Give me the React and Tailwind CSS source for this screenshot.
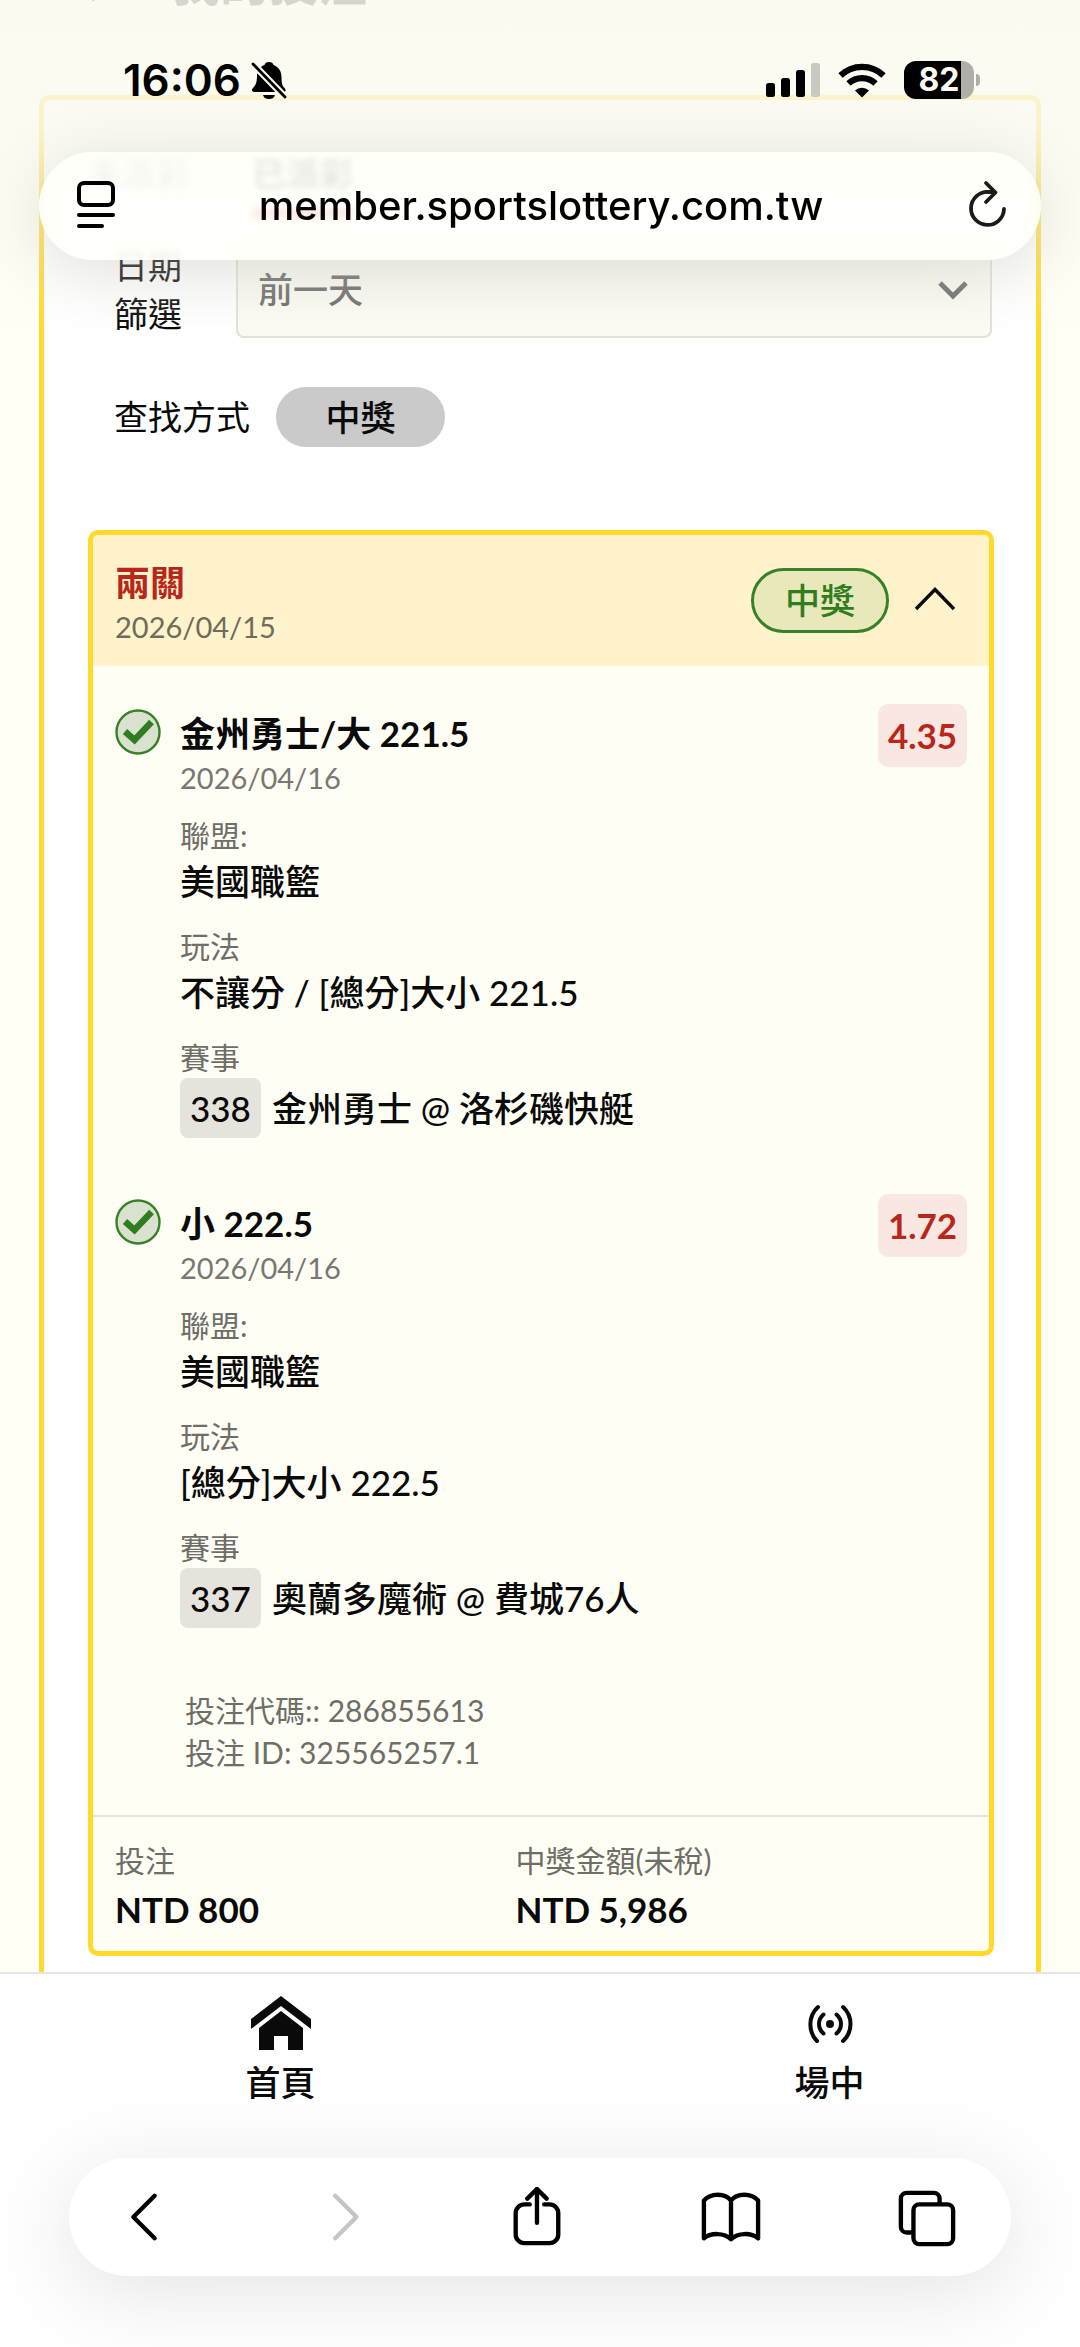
import React from "react";

const legs = [
  {
    title: "金州勇士/大 221.5",
    date: "2026/04/16",
    odds: "4.35",
    league: "美國職籃",
    play: "不讓分 / [總分]大小 221.5",
    code: "338",
    match: "金州勇士 @ 洛杉磯快艇",
  },
  {
    title: "小 222.5",
    date: "2026/04/16",
    odds: "1.72",
    league: "美國職籃",
    play: "[總分]大小 222.5",
    code: "337",
    match: "奧蘭多魔術 @ 費城76人",
  },
];

export default function App() {
  return (
    <div className="relative flex min-h-screen flex-col overflow-hidden bg-[#fffff5] font-['Lato','Noto_Sans_CJK_TC',sans-serif] text-[35px] text-[#0a0a0a]">
      <PageHeader />
      <main className="mx-[39px] rounded-t-[10px] border-x-[5px] border-t-[5px] border-[#ffd92b] bg-white pr-[42px] pb-4 pl-[44px]">
        <Tabs />
        <Filters />
        <BetCard />
      </main>
      <div className="flex flex-1 flex-col bg-[#fefefe]">
        <BottomNav />
        <SafariToolbar />
      </div>

      {/* browser chrome floating over the page */}
      <div className="pointer-events-none absolute inset-x-0 top-0 h-[330px] bg-linear-to-b from-[#fafaf0]/85 via-[#fafaf0]/80 via-40% to-[#fafaf0]/0" />
      <div className="absolute inset-x-0 top-0 z-20">
        <StatusBar />
        <AddressBar />
      </div>
    </div>
  );
}

function PageHeader() {
  return (
    <header className="flex h-[95px] items-start gap-[72px] pl-[71px]">
      <button type="button" aria-label="返回" className="-mt-[46px]">
        <svg width="28" height="48" viewBox="0 0 28 48" fill="none" stroke="currentColor" strokeWidth="5">
          <path d="M24 4 6 24l18 22" />
        </svg>
      </button>
      <h1 className="-mt-[46px] text-[49px] leading-[56px] font-bold">我的投注</h1>
    </header>
  );
}

function Tabs() {
  return (
    <div role="tablist" className="relative z-10 flex h-[142px] items-start gap-[62px] pt-[56px] text-[34px] leading-[36px]">
      <button type="button" role="tab" aria-selected="false" className="font-medium text-[#888]">
        未派彩
      </button>
      <button type="button" role="tab" aria-selected="true" className="border-b-[10px] border-[#ff2a1a] pb-4 font-bold">
        已派彩
      </button>
    </div>
  );
}

function Filters() {
  return (
    <div className="pr-0.5 pl-[26px]">
      <div className="flex items-center">
        <label htmlFor="date" className="w-[122px] pr-[50px] text-[34px] leading-[48px]">
          日期篩選
        </label>
        <div className="relative flex-1">
          <select
            id="date"
            className="block h-24 w-full appearance-none rounded-lg border-2 border-[#e3e0d9] bg-[#fcfbf3] pb-0.5 pl-5 font-medium text-[#6b6b6b]"
          >
            <option>前一天</option>
          </select>
          <svg className="pointer-events-none absolute top-9 right-6" width="30" height="24" viewBox="0 0 30 24" fill="none" stroke="#6b6b6b" strokeWidth="5">
            <path d="M2 5l13 13L28 5" />
          </svg>
        </div>
      </div>
      <div className="mt-[49px] flex items-center gap-[26px]">
        <span className="text-[34px] leading-[60px]">查找方式</span>
        <button type="button" className="h-[60px] w-[169px] rounded-full bg-[#cacaca] font-medium">
          中獎
        </button>
      </div>
    </div>
  );
}

function BetCard() {
  return (
    <section className="mt-[83px] overflow-hidden rounded-[10px] border-[5px] border-[#ffd92b] bg-[#fffef5]">
      <div className="flex h-[131px] items-center bg-[#fef3cb] px-[22px]">
        <div className="flex-1 pt-1.5 leading-[46px]">
          <h2 className="font-bold text-[#b9261b]">兩關</h2>
          <p className="text-[29px] leading-[44px] text-[#6f6c5a]">2026/04/15</p>
        </div>
        <span className="flex h-[65px] w-[138px] items-center justify-center rounded-full border-[3px] border-[#3a8029] bg-[#e9e8ba] font-medium text-[#2f7d1f]">
          中獎
        </span>
        <button type="button" aria-label="收合" className="mr-2.5 ml-6">
          <svg width="44" height="44" viewBox="0 0 44 44" fill="none" stroke="currentColor" strokeWidth="3.4">
            <path d="M3 30 22 10.500 41 30" />
          </svg>
        </button>
      </div>

      <div className="flex flex-col gap-14 px-[22px] pt-[38px] pb-[42px]">
        {legs.map((leg) => (
          <Leg key={leg.code} leg={leg} />
        ))}
        <div className="pt-[5px] pl-[70px] text-[30px] leading-[42px] text-[#6e6e69]">
          <p>投注代碼:: 286855613</p>
          <p>投注 ID: 325565257.1</p>
        </div>
      </div>

      <dl className="grid grid-cols-[47%_53%] border-t-2 border-[#e6e4dd] px-[22px] pt-[22px] pb-3.5">
        <div>
          <dt className="text-[30px] leading-[42px] text-[#6e6e69]">投注</dt>
          <dd className="leading-[56px] font-bold">NTD 800</dd>
        </div>
        <div>
          <dt className="text-[30px] leading-[42px] text-[#6e6e69]">中獎金額(未稅)</dt>
          <dd className="leading-[56px] font-bold">NTD 5,986</dd>
        </div>
      </dl>
    </section>
  );
}

const Leg = ({ leg }) => {
  return (
    <article className="flex items-start">
      <svg className="mt-[5px] mr-[19px] shrink-0" width="46" height="46" viewBox="0 0 46 46" fill="none">
        <circle cx="23" cy="23" r="21.500" fill="#d8e2ce" stroke="#3a8029" strokeWidth="2.4" />
        <path d="m10 22.500 9.500 8.500L36.500 13" stroke="#2f7d1f" strokeWidth="6.500" />
      </svg>
      <div className="flex-1 pt-[5px]">
        <h3 className="leading-[48px] font-bold">{leg.title}</h3>
        <p className="text-[29px] leading-[42px] text-[#777773]">{leg.date}</p>
        <div className="mt-[15px] flex flex-col gap-[19px] font-medium">
          <Field label="聯盟:">{leg.league}</Field>
          <Field label="玩法">{leg.play}</Field>
          <Field label="賽事">
            <span className="flex items-center gap-[11px] leading-[60px]">
              <span className="rounded-lg bg-[#e6e3dd] px-2.5">{leg.code}</span>
              {leg.match}
            </span>
          </Field>
        </div>
      </div>
      <span className="w-[89px] rounded-[10px] bg-[#f9e8e1] text-center leading-[63px] font-bold text-[#b9261b]">
        {leg.odds}
      </span>
    </article>
  );
};

const Field = ({ label, children }) => {
  return (
    <div>
      <div className="text-[30px] leading-[42px] font-normal text-[#6e6e69]">{label}</div>
      <div className="leading-[50px]">{children}</div>
    </div>
  );
};

function BottomNav() {
  return (
    <nav className="border-t-2 border-[#e6e6e6] pt-[22px]">
      {/* the row runs a little past the right edge */}
      <div className="-mr-6 ml-1.5 grid grid-cols-2 leading-[44px] font-medium">
        <a href="#home" className="flex flex-col items-center gap-2.5">
          <svg width="60" height="54" viewBox="0 0 60 54" fill="#0a0a0a">
            <path d="M30 0 60 23v10L30 10 0 33V23z" />
            <path d="M30 15 52 32v23H37V40H23v15H8V32z" />
          </svg>
          首頁
        </a>
        <a href="#live" className="flex flex-col items-center gap-2.5">
          <svg width="60" height="54" viewBox="0 0 60 54" fill="none" stroke="#0a0a0a" strokeWidth="4" strokeLinecap="round">
            <circle cx="30" cy="28" r="4" fill="#0a0a0a" stroke="none" />
            <path d="M23.500 18.500c-6 5-6 14 0 19M36.500 18.500c6 5 6 14 0 19M18 11c-10 9-10 25-1 34M43 11c10 9 10 25 0 34" />
          </svg>
          場中
        </a>
      </div>
    </nav>
  );
}

const toolbar = [
  { label: "上一頁", color: "text-black", d: "M42 9 20 31l22 22" },
  { label: "下一頁", color: "text-[#c5c5c5]", d: "M26 9 48 31 26 53" },
  {
    label: "分享",
    color: "text-black",
    d: "M24.500 18H19a9 9 0 0 0-9 9v22a9 9 0 0 0 9 9h26a9 9 0 0 0 9-9V27a9 9 0 0 0-9-9h-5.500M32 37V2M22 12L32 2l10 10",
  },
  {
    label: "書籤",
    color: "text-black",
    d: "M31 14C25 6 10 6 3 14v39c7-6 21-6 28 1 7-7 21-7 28-1V14C52 6 37 6 31 14v40",
  },
  {
    label: "分頁",
    color: "text-black",
    d: "M44 16v-4a6 6 0 0 0-6-6H10a6 6 0 0 0-6 6v29a6 6 0 0 0 6 6h7M23 18h29a6 6 0 0 1 6 6v29a6 6 0 0 1-6 6H23a6 6 0 0 1-6-6V24a6 6 0 0 1 6-6z",
  },
];

function SafariToolbar() {
  return (
    <div className="mx-[69px] mt-[54px] mb-[69px] flex h-[118px] items-center justify-between rounded-full bg-white pr-[54px] pl-[45px] shadow-[0_16px_80px_rgba(0,0,0,0.1)]">
      {toolbar.map((item) => (
        <button key={item.label} type="button" aria-label={item.label} className={item.color}>
          <svg width="60" height="60" viewBox="0 0 62 62" fill="none" stroke="currentColor" strokeWidth="4.500" strokeLinecap="round" strokeLinejoin="round">
            <path d={item.d} />
          </svg>
        </button>
      ))}
    </div>
  );
}

function StatusBar() {
  return (
    <div className="flex h-[152px] items-start justify-between pt-12 pr-[100px] pl-[123px] font-['Inter',sans-serif] text-black">
      <div className="flex h-16 items-center gap-2.5">
        <span className="text-[44px] leading-[64px] font-semibold">16:06</span>
        <svg width="36" height="38" viewBox="0 0 36 38">
          <path d="M18 1c2.500 0 4 1 4.500 3 5 2 8 6 8 12 0 7 1 9 3 11 2 2 1 4-1 4H4c-3 0-4-2-2-4 2-2 4-5 4-11S8 6 13.500 4C14 2 15.500 1 18 1zM12 34h12c-1 3-3 4-6 4s-5-1-6-4z" />
          <path d="M2 3l32 33" stroke="#faf8ec" strokeWidth="7" />
          <path d="M2 3l32 33" stroke="#000" strokeWidth="2.800" strokeLinecap="round" />
        </svg>
      </div>
      <div className="flex h-16 items-center gap-[18px]">
        <svg width="54" height="34" viewBox="0 0 54 34">
          <rect x="0" y="20" width="9" height="14" rx="2.500" />
          <rect x="15" y="15" width="9" height="19" rx="2.500" />
          <rect x="30" y="7" width="9" height="27" rx="2.500" />
          <rect x="45" y="0" width="9" height="34" rx="2.500" fill="#c9c8c1" />
        </svg>
        <svg width="48" height="36" viewBox="0 0 48 36" fill="none" stroke="#000" strokeWidth="6.200">
          <path d="M2.500 13.500a31 31 0 0 1 43 0M10.500 21.500a19.500 19.500 0 0 1 27 0" />
          <path d="M24 35.500l-7-7a10 10 0 0 1 14 0z" fill="#000" stroke="none" />
        </svg>
        <div className="flex items-center gap-0.5">
          <div className="flex h-[38px] w-[70px] items-center justify-center rounded-[12px] bg-linear-to-r from-black from-82% to-[#b0aea9] to-82% text-[32px] leading-[38px] font-bold text-[#fafaf0]">
            82
          </div>
          <div className="h-3 w-1 rounded-r-full bg-[#b0aea9]" />
        </div>
      </div>
    </div>
  );
}

function AddressBar() {
  return (
    <div className="mx-[39px] flex h-[108px] items-center justify-between rounded-full bg-[#fffffb]/90 pr-[34px] pl-[38px] font-['Inter',sans-serif] shadow-[0_12px_70px_rgba(0,0,0,0.12)] backdrop-blur-[3px]">
      <button type="button" aria-label="頁面選單">
        <svg width="38" height="54" viewBox="0 0 38 54" fill="none" stroke="#000" strokeWidth="4" strokeLinecap="round">
          <rect x="2" y="4" width="34" height="22" rx="5" />
          <path d="M2 36h34M2 47h23" />
        </svg>
      </button>
      <span className="text-[40px] leading-[44px] font-medium text-black">member.sportslottery.com.tw</span>
      <button type="button" aria-label="重新載入">
        <svg width="40" height="54" viewBox="0 0 40 54" fill="none" stroke="#1c1b18" strokeWidth="3.800" strokeLinecap="round" strokeLinejoin="round">
          <path d="M28 13H21.500A16.500 16.500 0 1 0 37 30M19 4l9.500 9.500L19 23" />
        </svg>
      </button>
    </div>
  );
}
